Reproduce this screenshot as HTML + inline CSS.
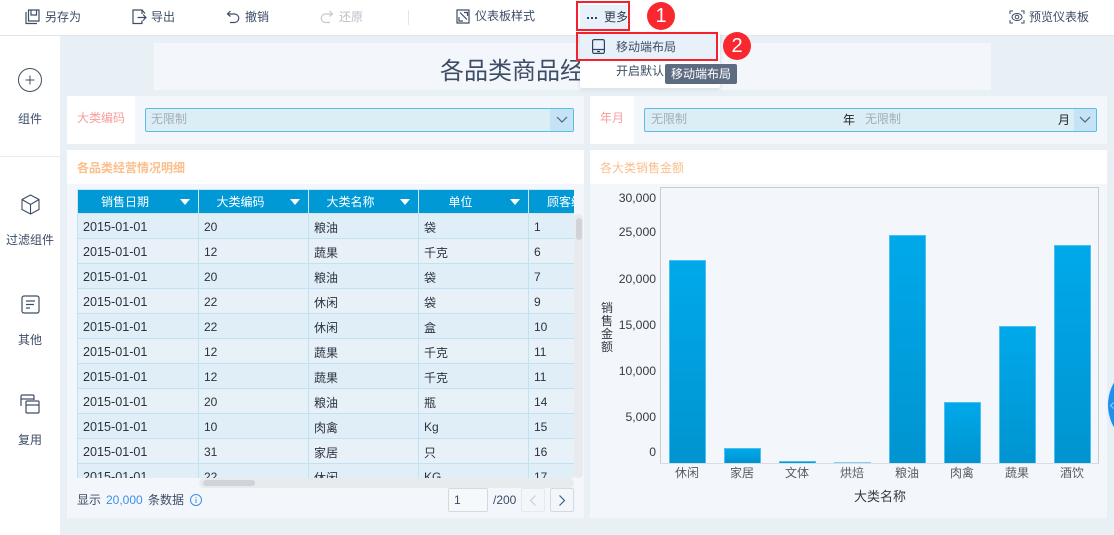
<!DOCTYPE html>
<html lang="zh-CN">
<head>
<meta charset="utf-8">
<title>仪表板</title>
<style>
html,body{margin:0;padding:0}
body{width:1114px;height:535px;overflow:hidden;position:relative;background:#e8f0f6;font-family:"Liberation Sans","Noto Sans CJK SC",sans-serif;font-size:12px;color:#3d4d66}
.a{position:absolute;white-space:nowrap}
.t{line-height:16px}
svg{position:absolute;overflow:visible}
.panel{position:absolute;background:#f3f7fb}
.inp{position:absolute;background:#dbeef6;border:1px solid #5bbde6;border-radius:2px;box-sizing:border-box}
.arr{position:absolute;background:#c5e3f5}
.ph{color:#a3adb8}
table{border-collapse:collapse;table-layout:fixed;position:absolute;left:0;top:0;width:498px}
td,th{box-sizing:border-box;height:25px;padding:2px 0 0 5px;text-align:left;font-weight:normal;font-size:12px;border:1px solid #bfe3f3;white-space:nowrap;overflow:hidden;color:#2b3240}
td:first-child{font-size:12.6px}
th{height:24px;background:#0099d6;color:#fff;border:1px solid #cfe6f2;text-align:center;padding:0 26px 0 0;position:relative}
th i{position:absolute;right:8px;top:9px;width:0;height:0;border-left:5px solid transparent;border-right:5px solid transparent;border-top:6px solid #fff}
tr.o td{background:#e0eff7}
tr.e td{background:#e9f1f8}
.bar{position:absolute;width:37px;box-sizing:border-box;border:1px solid #4dbfee;border-bottom:none;background:linear-gradient(#00a9ea,#0094d0)}
.yl{position:absolute;right:458px;width:60px;text-align:right;font-size:12.2px;line-height:16px;color:#333a45}
.xl{position:absolute;top:465px;width:50px;text-align:center;line-height:16px;color:#555c66}
.side{position:absolute;left:0;width:60px;text-align:center;line-height:16px;color:#3d4d66}
</style>
</head>
<body>
<!-- toolbar -->
<div class="a" style="left:0;top:0;width:1114px;height:35px;background:#fff;border-bottom:1px solid #e3e6e9"></div>
<!-- sidebar -->
<div class="a" style="left:0;top:36px;width:60px;height:499px;background:#fff"></div>
<div class="a" style="left:0;top:156px;width:60px;height:1px;background:#e5eaee"></div>

<!-- toolbar items -->
<svg style="left:25px;top:9px" width="16" height="16" viewBox="0 0 16 16" fill="none" stroke="#3d4d66" stroke-width="1.2"><path d="M1 3v11.500h11"/><path d="M3.500 1h10.500v11H3.500z"/><path d="M6 1v5h5.500V1"/></svg>
<div class="a t" style="left:45px;top:9px">另存为</div>
<svg style="left:132px;top:9px" width="15" height="16" viewBox="0 0 15 16" fill="none" stroke="#3d4d66" stroke-width="1.2"><path d="M10 5V1H1v13.500h9v-3"/><path d="M10 1l3 3.500"/><path d="M5.500 8.500H14M11 5.500l3 3-3 3"/></svg>
<div class="a t" style="left:151px;top:9px">导出</div>
<svg style="left:226px;top:10px" width="14" height="14" viewBox="0 0 14 14" fill="none" stroke="#3d4d66" stroke-width="1.2"><path d="M4.500 1L1.500 4l3 2.500"/><path d="M1.500 4h7a4 4 0 0 1 0 8.500H4"/></svg>
<div class="a t" style="left:245px;top:9px">撤销</div>
<svg style="left:320px;top:10px" width="14" height="14" viewBox="0 0 14 14" fill="none" stroke="#c3c9d1" stroke-width="1.2"><path d="M9.500 1l3 3-3 2.500"/><path d="M12.500 4h-7a4 4 0 0 0 0 8.500H10"/></svg>
<div class="a t" style="left:339px;top:9px;color:#b9c0c9">还原</div>
<div class="a" style="left:408px;top:10px;width:1px;height:15px;background:#e3e6e9"></div>
<svg style="left:456px;top:9px" width="14" height="15" viewBox="0 0 14 15" fill="none" stroke="#3d4d66" stroke-width="1.200"><path d="M1 1h12v13H1z"/><path d="M4 3.500l7 7M8 3.500h3.500v3.500M3 8v4h4"/></svg>
<div class="a t" style="left:475px;top:8px">仪表板样式</div>

<div class="a" style="left:580px;top:5px;width:47px;height:25px;background:#e8f1fa"></div>
<div class="a" style="left:587px;top:17px;width:2px;height:2px;background:#25466e;box-shadow:4px 0 0 #25466e,8px 0 0 #25466e"></div>
<div class="a t" style="left:604px;top:9px;color:#2f3a4a">更多</div>
<svg style="left:1009px;top:10px" width="16" height="14" viewBox="0 0 16 14" fill="none" stroke="#3d4d66" stroke-width="1"><path d="M1 4V1h3M12 1h3v3M15 10v3h-3M4 13H1v-3"/><ellipse cx="8" cy="7" rx="5" ry="3.500"/><circle cx="8" cy="7" r="1.800"/></svg>
<div class="a t" style="left:1029px;top:9px">预览仪表板</div>

<!-- sidebar items -->
<svg style="left:18px;top:68px" width="24" height="24" viewBox="0 0 24 24" fill="none" stroke="#3d4d66" stroke-width="1"><circle cx="12" cy="12" r="11.500"/><path d="M7.500 12h9M12 7.500v9"/></svg>
<div class="side" style="top:111px">组件</div>
<svg style="left:21px;top:194px" width="19" height="21" viewBox="0 0 19 21" fill="none" stroke="#3d4d66" stroke-width="1.100"><path d="M9.500 1L18 5.500v10L9.500 20 1 15.500v-10z"/><path d="M1 5.500l8.500 5 8.500-5M9.500 10.500V20"/></svg>
<div class="side" style="top:232px">过滤组件</div>
<svg style="left:21px;top:295px" width="19" height="19" viewBox="0 0 19 19" fill="none" stroke="#3d4d66" stroke-width="1.200"><rect x="1" y="1" width="17" height="17" rx="2"/><path d="M5 6h9M5 9.500h8M5 13h4"/></svg>
<div class="side" style="top:332px">其他</div>
<svg style="left:20px;top:394px" width="20" height="20" viewBox="0 0 20 20" fill="none" stroke="#3d4d66" stroke-width="1.200"><path d="M1 12V2.500Q1 1 2.500 1h10Q14 1 14 2.500V6"/><path d="M1 5h13"/><rect x="6" y="7" width="13" height="12" rx="1"/><path d="M6 11h13"/></svg>
<div class="side" style="top:432px">复用</div>

<!-- title -->
<div class="panel" style="left:154px;top:43px;width:837px;height:47px"></div>
<div class="a" style="left:440px;top:55px;font-size:24px;line-height:34px;color:#3d4d66">各品类商品经营情况明细</div>

<!-- filter left -->
<div class="panel" style="left:67px;top:96px;width:517px;height:48px"></div>
<div class="a" style="left:67px;top:96px;width:68px;height:48px;background:#fff"></div>
<div class="a t" style="left:77px;top:110px;color:#fb9c9c">大类编码</div>
<div class="inp" style="left:145px;top:108px;width:429px;height:24px"></div>
<div class="arr" style="left:550px;top:109px;width:23px;height:22px"></div>
<svg style="left:556px;top:116px" width="12" height="8" viewBox="0 0 12 8" fill="none" stroke="#3d6a88" stroke-width="1.200"><path d="M1 1l5 5 5-5"/></svg>
<div class="a t ph" style="left:151px;top:111px">无限制</div>

<!-- filter right -->
<div class="panel" style="left:590px;top:96px;width:517px;height:48px"></div>
<div class="a" style="left:590px;top:96px;width:44px;height:48px;background:#fff"></div>
<div class="a t" style="left:600px;top:110px;color:#fb9c9c">年月</div>
<div class="inp" style="left:644px;top:108px;width:453px;height:24px"></div>
<div class="arr" style="left:1074px;top:109px;width:22px;height:22px"></div>
<svg style="left:1079px;top:116px" width="12" height="8" viewBox="0 0 12 8" fill="none" stroke="#3d6a88" stroke-width="1.200"><path d="M1 1l5 5 5-5"/></svg>
<div class="a t ph" style="left:651px;top:111px">无限制</div>
<div class="a t" style="left:843px;top:112px;color:#222">年</div>
<div class="a t ph" style="left:865px;top:111px">无限制</div>
<div class="a t" style="left:1058px;top:112px;color:#222">月</div>

<!-- table panel -->
<div class="panel" style="left:67px;top:150px;width:517px;height:368px"></div>
<div class="a" style="left:67px;top:150px;width:517px;height:34px;background:#fff"></div>
<div class="a t" style="left:77px;top:160px;color:#fbbf8c;font-weight:bold">各品类经营情况明细</div>
<div class="a" style="left:77px;top:189px;width:497px;height:289px;overflow:hidden">
<table>
<colgroup><col style="width:121px"><col style="width:110px"><col style="width:110px"><col style="width:110px"><col style="width:47px"></colgroup>
<tr><th>销售日期<i></i></th><th>大类编码<i></i></th><th>大类名称<i></i></th><th>单位<i></i></th><th style="padding:0 0 0 18px;text-align:left">顾客编号</th></tr>
<tr class="o"><td>2015-01-01</td><td>20</td><td>粮油</td><td>袋</td><td>1</td></tr>
<tr class="e"><td>2015-01-01</td><td>12</td><td>蔬果</td><td>千克</td><td>6</td></tr>
<tr class="o"><td>2015-01-01</td><td>20</td><td>粮油</td><td>袋</td><td>7</td></tr>
<tr class="e"><td>2015-01-01</td><td>22</td><td>休闲</td><td>袋</td><td>9</td></tr>
<tr class="o"><td>2015-01-01</td><td>22</td><td>休闲</td><td>盒</td><td>10</td></tr>
<tr class="e"><td>2015-01-01</td><td>12</td><td>蔬果</td><td>千克</td><td>11</td></tr>
<tr class="o"><td>2015-01-01</td><td>12</td><td>蔬果</td><td>千克</td><td>11</td></tr>
<tr class="e"><td>2015-01-01</td><td>20</td><td>粮油</td><td>瓶</td><td>14</td></tr>
<tr class="o"><td>2015-01-01</td><td>10</td><td>肉禽</td><td>Kg</td><td>15</td></tr>
<tr class="e"><td>2015-01-01</td><td>31</td><td>家居</td><td>只</td><td>16</td></tr>
<tr class="o"><td>2015-01-01</td><td>22</td><td>休闲</td><td>KG</td><td>17</td></tr>
</table>
</div>
<!-- scrollbars -->
<div class="a" style="left:574px;top:214px;width:9px;height:264px;background:#e8ebee;border-radius:4px"></div>
<div class="a" style="left:576px;top:218px;width:6px;height:22px;background:#d0d4d8;border-radius:3px"></div>
<div class="a" style="left:199px;top:478px;width:375px;height:10px;background:#e8ebee;border-radius:5px"></div>
<div class="a" style="left:203px;top:480px;width:52px;height:6px;background:#d0d4d8;border-radius:3px"></div>
<!-- footer -->
<div class="a t" style="left:77px;top:492px;color:#3d4d66">显示</div>
<div class="a t" style="left:106px;top:492px;color:#3d8fe8">20,000</div>
<div class="a t" style="left:148px;top:492px;color:#3d4d66">条数据</div>
<svg style="left:190px;top:494px" width="12" height="12" viewBox="0 0 12 12" fill="none" stroke="#3d8fe8" stroke-width="1"><circle cx="6" cy="6" r="5.500"/><path d="M6 5v4M6 3v1"/></svg>
<div class="a" style="left:448px;top:488px;width:40px;height:24px;box-sizing:border-box;border:1px solid #d5dade;border-radius:2px;background:#f6f9fb"></div>
<div class="a t" style="left:454px;top:492px;color:#3d4d66">1</div>
<div class="a t" style="left:493px;top:492px;color:#3d4d66">/200</div>
<div class="a" style="left:521px;top:488px;width:24px;height:24px;box-sizing:border-box;border:1px solid #e6eaed;border-radius:2px"></div>
<svg style="left:529px;top:495px" width="8" height="11" viewBox="0 0 8 11" fill="none" stroke="#c9ced3" stroke-width="1.200"><path d="M6.500 .5l-5 5 5 5"/></svg>
<div class="a" style="left:550px;top:488px;width:24px;height:24px;box-sizing:border-box;border:1px solid #d5dade;border-radius:2px"></div>
<svg style="left:558px;top:495px" width="8" height="11" viewBox="0 0 8 11" fill="none" stroke="#3d5f80" stroke-width="1.200"><path d="M1.500 .5l5 5-5 5"/></svg>

<!-- chart panel -->
<div class="panel" style="left:590px;top:150px;width:517px;height:368px"></div>
<div class="a" style="left:590px;top:150px;width:517px;height:34px;background:#fff"></div>
<div class="a t" style="left:600px;top:160px;color:#fbbf8c">各大类销售金额</div>
<div class="a" style="left:660px;top:187px;width:439px;height:277px;box-sizing:border-box;border:1px solid #c8cdd2;border-bottom:1px solid #d9dde1"></div>
<div class="yl" style="top:190px">30,000</div>
<div class="yl" style="top:224px">25,000</div>
<div class="yl" style="top:271px">20,000</div>
<div class="yl" style="top:317px">15,000</div>
<div class="yl" style="top:363px">10,000</div>
<div class="yl" style="top:409px">5,000</div>
<div class="yl" style="top:444px">0</div>
<div class="a" style="left:600px;top:302px;width:14px;line-height:13px;font-size:12px;color:#333a45;white-space:normal;text-align:center">销售金额</div>
<div class="bar" style="left:669px;top:260px;height:203px"></div>
<div class="bar" style="left:724px;top:448px;height:15px"></div>
<div class="bar" style="left:779px;top:461px;height:2px"></div>
<div class="bar" style="left:834px;top:462px;height:1px;background:#7fd0f2;border:none"></div>
<div class="bar" style="left:889px;top:235px;height:228px"></div>
<div class="bar" style="left:944px;top:402px;height:61px"></div>
<div class="bar" style="left:999px;top:326px;height:137px"></div>
<div class="bar" style="left:1054px;top:245px;height:218px"></div>
<div class="xl" style="left:662px">休闲</div>
<div class="xl" style="left:717px">家居</div>
<div class="xl" style="left:772px">文体</div>
<div class="xl" style="left:827px">烘焙</div>
<div class="xl" style="left:882px">粮油</div>
<div class="xl" style="left:937px">肉禽</div>
<div class="xl" style="left:992px">蔬果</div>
<div class="xl" style="left:1047px">酒饮</div>
<div class="a t" style="left:854px;top:489px;color:#333a45;font-size:13px">大类名称</div>

<!-- side handle -->
<div class="a" style="left:1108px;top:360px;width:90px;height:90px;border-radius:50%;background:#1f8ff0"></div>
<svg style="left:1110px;top:402px" width="4" height="7" viewBox="0 0 4 7" fill="none" stroke="#9cd0f8" stroke-width="1"><path d="M3.500 .5L.5 3.500l3 3"/></svg>

<!-- dropdown -->
<div class="a" style="left:580px;top:33px;width:140px;height:55px;background:#fff;box-shadow:0 1px 4px rgba(60,80,100,.2);border-radius:0 0 2px 2px"></div>
<div class="a" style="left:580px;top:33px;width:136px;height:26px;background:#e8f1fa"></div>
<svg style="left:592px;top:39px" width="13" height="15" viewBox="0 0 13 15" fill="none" stroke="#2f4560" stroke-width="1.200"><rect x=".6" y=".6" width="11.800" height="13.800" rx="1.500"/><path d="M.6 10.500h11.800M5 12.500h3"/></svg>
<div class="a t" style="left:616px;top:39px;color:#3d4d66">移动端布局</div>
<div class="a t" style="left:616px;top:63px;color:#3d4d66">开启默认</div>
<div class="a" style="left:665px;top:64px;width:72px;height:20px;background:#5c6b80;border-radius:2px;color:#fff;text-align:center;line-height:20px">移动端布局</div>

<!-- annotations -->
<div class="a" style="left:576px;top:1px;width:54px;height:30px;box-sizing:border-box;border:2px solid #f3212b"></div>
<div class="a" style="left:576px;top:32px;width:142px;height:29px;box-sizing:border-box;border:2px solid #f3212b"></div>
<div class="a" style="left:647px;top:2px;width:28px;height:28px;border-radius:50%;background:#f9272f;color:#fff;text-align:center;font-size:20px;line-height:28px">1</div>
<div class="a" style="left:723px;top:32px;width:28px;height:28px;border-radius:50%;background:#f9272f;color:#fff;text-align:center;font-size:20px;line-height:28px">2</div>
</body>
</html>
